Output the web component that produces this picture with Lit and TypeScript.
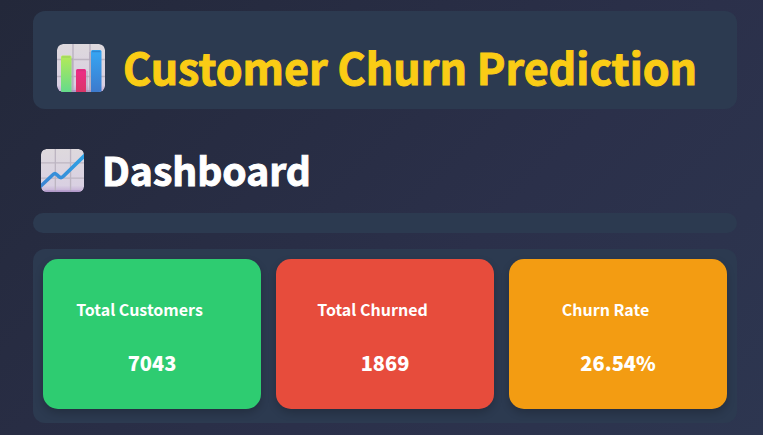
import { LitElement, html, css, svg } from "lit";
import { customElement, property } from "lit/decorators.js";

const grid = svg`
  <rect width="48" height="48" rx="6" fill="url(#paper)"/>
  <path d="M16 0V48M33 0V48M0 15.500H48M0 32.500H48" stroke="#bdb5c2" stroke-width="1.500"/>
  <rect y="46" x="4" width="40" height="2" rx="1" fill="#a48bc0" opacity=".6"/>`;

const paper = svg`
  <linearGradient id="paper" x1="0" y1="0" x2="0" y2="1">
    <stop offset="0" stop-color="#ded9dd"/>
    <stop offset=".85" stop-color="#d9d0e2"/>
    <stop offset="1" stop-color="#c3acd6"/>
  </linearGradient>`;

@customElement("bar-chart-icon")
export class BarChartIcon extends LitElement {
  static styles = css`
    :host { display: block; flex: none; width: 48px; height: 48px; }
    .art { display: block; width: 100%; height: 100%; }
  `;
  render() {
    return html`<svg class="art" viewBox="0 0 48 48" aria-hidden="true">
      <defs>
        ${paper}
        <linearGradient id="green" x1="0" y1="0" x2="0" y2="1">
          <stop offset="0" stop-color="#b5ea58"/><stop offset="1" stop-color="#62da8d"/>
        </linearGradient>
        <linearGradient id="pink" x1="0" y1="0" x2="0" y2="1">
          <stop offset="0" stop-color="#ee2c88"/><stop offset="1" stop-color="#d83665"/>
        </linearGradient>
        <linearGradient id="blue" x1="0" y1="0" x2="0" y2="1">
          <stop offset="0" stop-color="#36a7f4"/><stop offset="1" stop-color="#3d78cb"/>
        </linearGradient>
        <clipPath id="edge"><rect width="48" height="48" rx="6"/></clipPath>
      </defs>
      <g clip-path="url(#edge)">
        ${grid}
        <path d="M15 14V48M30 27V48M33 8V48" stroke="#a99bb2" stroke-width="1.500" opacity=".55"/>
        <rect x="4" y="11.500" width="10.500" height="38" rx="1.500" fill="url(#green)"/>
        <path d="M5 13H13" stroke="#a2d65c" stroke-width="1.500"/>
        <rect x="19" y="25" width="10" height="25" rx="1.500" fill="url(#pink)"/>
        <path d="M20 26.500H28" stroke="#d92f7c" stroke-width="1.500"/>
        <rect x="34" y="6" width="10.500" height="44" rx="1.500" fill="url(#blue)"/>
        <path d="M35 7.500H43.500" stroke="#2f86d2" stroke-width="1.500"/>
      </g>
    </svg>`;
  }
}

@customElement("trend-icon")
export class TrendIcon extends LitElement {
  static styles = css`
    :host { display: block; flex: none; width: 43px; height: 43px; }
    .art { display: block; width: 100%; height: 100%; }
  `;
  render() {
    return html`<svg class="art" viewBox="0 0 48 48" aria-hidden="true">
      <defs>
        ${paper}
        <linearGradient id="line" x1="0" y1="1" x2="1" y2="0">
          <stop offset="0" stop-color="#3c83d2"/><stop offset="1" stop-color="#2da3e6"/>
        </linearGradient>
        <clipPath id="edge"><rect width="48" height="48" rx="6"/></clipPath>
      </defs>
      <g clip-path="url(#edge)">
        ${grid}
        <path d="M-2 43L13.500 28.500Q15.500 26.500 17.500 28.500L20 30.800Q22.500 33 25 30.500L50 6"
          fill="none" stroke="url(#line)" stroke-width="4" stroke-linejoin="round"/>
      </g>
    </svg>`;
  }
}

@customElement("metric-card")
export class MetricCard extends LitElement {
  @property() label = "";
  @property() value = "";
  @property({ reflect: true }) tone = "green";

  static styles = css`
    :host {
      display: block;
      box-sizing: border-box;
      min-height: 150px;
      padding: 35px 10px 28px;
      border-radius: 15px;
      box-shadow: 0 4px 8px rgba(0, 0, 0, 0.2);
      color: #fff;
      text-align: center;
    }
    :host([tone="green"]) { background: #2ecc71; }
    :host([tone="red"]) { background: #e74c3c; }
    :host([tone="orange"]) { background: #f39c12; }
    .label {
      margin: 0;
      padding-right: 25px;
      font-size: 16px;
      line-height: 30px;
      font-weight: 700;
    }
    .value {
      margin: 24px 0 0;
      font-size: 20px;
      line-height: 30px;
      font-weight: 900;
    }
  `;
  render() {
    return html`
      <h4 class="label">${this.label}</h4>
      <p class="value">${this.value}</p>
    `;
  }
}

@customElement("app-root")
export class AppRoot extends LitElement {
  static styles = css`
    :host {
      display: block;
      box-sizing: border-box;
      min-height: 100vh;
      padding: 11px 26px 12px 33px;
      background: linear-gradient(135deg, #23283a, #2b304a 60%, #2d3650);
      color: #fff;
      font-family: "Noto Sans CJK SC", "Noto Sans", sans-serif;
    }
    .panel { background: #2c3a50; border-radius: 12px; }
    .banner {
      display: flex;
      align-items: center;
      gap: 18px;
      padding: 23px 24px 7px;
    }
    .title {
      margin: 0;
      padding-bottom: 4px;
      color: #facc15;
      font-size: 43px;
      line-height: 64px;
      font-weight: 700;
      white-space: nowrap;
      -webkit-text-stroke: 1px currentColor;
    }
    .section {
      display: flex;
      align-items: center;
      gap: 18px;
      padding: 30px 8px 12px;
    }
    .heading {
      margin: 0;
      padding-bottom: 2px;
      font-size: 39px;
      line-height: 60px;
      font-weight: 700;
      -webkit-text-stroke: 1px currentColor;
    }
    .strip { height: 20px; border-radius: 10px; }
    .metrics {
      display: grid;
      grid-template-columns: repeat(3, 1fr);
      gap: 15px;
      margin-top: 16px;
      padding: 10px 10px 14px;
    }
  `;
  private metrics = [
    { label: "Total Customers", value: "7043", tone: "green" },
    { label: "Total Churned", value: "1869", tone: "red" },
    { label: "Churn Rate", value: "26.54%", tone: "orange" },
  ];
  render() {
    return html`
      <header class="panel banner">
        <bar-chart-icon></bar-chart-icon>
        <h1 class="title">Customer Churn Prediction</h1>
      </header>
      <main>
        <div class="section">
          <trend-icon></trend-icon>
          <h2 class="heading">Dashboard</h2>
        </div>
        <div class="panel strip"></div>
        <section class="panel metrics">
          ${this.metrics.map(
            (m) => html`<metric-card .label=${m.label} .value=${m.value} tone=${m.tone}></metric-card>`
          )}
        </section>
      </main>
    `;
  }
}
